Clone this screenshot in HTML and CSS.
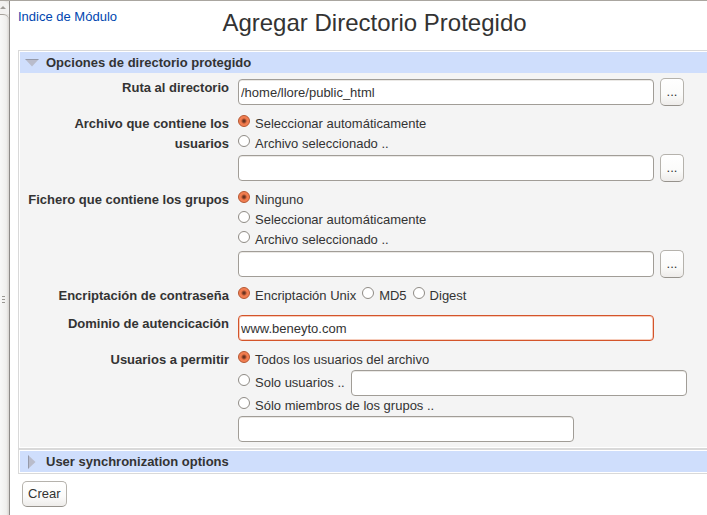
FILE: index.html
```
<!DOCTYPE html>
<html lang="es">
<head>
    <meta charset="UTF-8">
    <meta name="viewport" content="width=device-width, initial-scale=1.0">
    <title>Agregar Directorio Protegido</title>
    <link rel="stylesheet" href="styles.css">
</head>
<body>
    <div class="scrollbar">
        <div class="scroll-up">
            <svg width="6" height="3" viewBox="0 0 6 3"><path d="M0 3L3 0L6 3Z" fill="#a09d98"/></svg>
        </div>
        <div class="scroll-thumb">
            <svg width="3" height="8" viewBox="0 0 3 8"><path d="M0 .5H3M0 3.5H3M0 6.5H3" stroke="#9a9792"/></svg>
        </div>
    </div>
    <main class="page">
        <header class="header">
            <a href="#">Indice de Módulo</a>
            <h1>Agregar Directorio Protegido</h1>
        </header>
        <form>
            <section class="panel">
                <h2 class="panel-title">
                    <svg class="arrow" width="14" height="14" viewBox="0 0 14 14"><path d="M.5 3.5H13.5L7 10.5Z" fill="#b9bccb"/><path d="M.5 3.5H13.5" stroke="#9599a8"/></svg>
                    Opciones de directorio protegido
                </h2>
                <div class="options">
                    <label class="name" for="dir">Ruta al directorio</label>
                    <div class="line">
                        <input type="text" id="dir" class="text long" value="/home/llore/public_html">
                        <button type="button" class="browse">...</button>
                    </div>

                    <div class="name">Archivo que contiene los usuarios</div>
                    <div>
                        <label class="choice"><input type="radio" name="users" checked>Seleccionar automáticamente</label>
                        <label class="choice"><input type="radio" name="users">Archivo seleccionado ..</label>
                        <div class="line">
                            <input type="text" class="text long" aria-label="Archivo de usuarios">
                            <button type="button" class="browse">...</button>
                        </div>
                    </div>

                    <div class="name">Fichero que contiene los grupos</div>
                    <div>
                        <label class="choice"><input type="radio" name="groups" checked>Ninguno</label>
                        <label class="choice"><input type="radio" name="groups">Seleccionar automáticamente</label>
                        <label class="choice"><input type="radio" name="groups">Archivo seleccionado ..</label>
                        <div class="line">
                            <input type="text" class="text long" aria-label="Fichero de grupos">
                            <button type="button" class="browse">...</button>
                        </div>
                    </div>

                    <div class="name">Encriptación de contraseña</div>
                    <div class="choices">
                        <label class="choice"><input type="radio" name="crypt" checked>Encriptación Unix</label>
                        <label class="choice"><input type="radio" name="crypt">MD5</label>
                        <label class="choice"><input type="radio" name="crypt">Digest</label>
                    </div>

                    <label class="name" for="realm">Dominio de autencicación</label>
                    <div class="line">
                        <input type="text" id="realm" class="text long active" value="www.beneyto.com">
                    </div>

                    <div class="name">Usuarios a permitir</div>
                    <div>
                        <label class="choice"><input type="radio" name="allow" checked>Todos los usuarios del archivo</label>
                        <div class="choices with-text">
                            <label class="choice"><input type="radio" name="allow">Solo usuarios ..</label>
                            <input type="text" class="text short" aria-label="Solo usuarios">
                        </div>
                        <label class="choice"><input type="radio" name="allow">Sólo miembros de los grupos ..</label>
                        <input type="text" class="text short" aria-label="Sólo miembros de los grupos">
                    </div>
                </div>
            </section>
            <section class="panel">
                <h2 class="panel-title">
                    <svg class="arrow" width="14" height="14" viewBox="0 0 14 14"><path d="M3.5 .5V13.5L10.5 7Z" fill="#b9bccb"/><path d="M3.5 .5V13.5" stroke="#9599a8"/></svg>
                    User synchronization options
                </h2>
            </section>
            <button type="submit" class="create">Crear</button>
        </form>
    </main>
</body>
</html>
```
FILE: styles.css
```
body {
    margin: 0;
    min-height: 100vh;
    box-sizing: border-box;
    border-top: 1px solid #aaa6a0;
    display: flex;
    overflow: hidden;
    background-color: #fff;
    color: #333;
    font-family: "Liberation Sans", Arial, sans-serif;
    font-size: 13px;
    line-height: 20px;
}
.scrollbar {
    flex: none;
    width: 9px;
    border-right: 1px solid #8e8b88;
    background-color: #e6e4e1;
    display: flex;
    flex-direction: column;
}
.scroll-up {
    height: 13px;
    display: flex;
    align-items: center;
    background-color: #f2f1f0;
    border-top-right-radius: 6px;
}
.scroll-thumb {
    flex: 1;
    display: flex;
    align-items: center;
    padding: 70px 4px 0 2px;
    border-top: 1px solid #a5a19b;
    border-top-right-radius: 6px;
    background: linear-gradient(to right, #f8f8f7, #f0efed 70%, #d8d5d1);
}
.page {
    flex: 1;
    min-width: 0;
    padding-left: 8px;
}
.header {
    display: grid;
    grid-template-columns: 100px 1fr 76px;
    padding-top: 6px;
    height: 43px;
}
.header a {
    color: #0046b0;
    text-decoration: none;
    white-space: nowrap;
}
h1 {
    margin: 0;
    font-size: 24px;
    font-weight: normal;
    line-height: 32px;
    text-align: center;
    white-space: nowrap;
}
.panel {
    border: 1px solid #d9d9d9;
    border-right: none;
    padding: 1px 0 1px 1px;
}
.panel-title {
    margin: 0;
    padding-left: 5px;
    display: flex;
    align-items: center;
    gap: 7px;
    background-color: #cfdefc;
    font-size: 13px;
    line-height: 21px;
}
.arrow {
    flex: none;
}
.options {
    display: grid;
    grid-template-columns: 209px 1fr;
    gap: 8px 9px;
    padding: 5px 0;
    background-color: #f4f4f4;
}
.name {
    font-weight: bold;
    text-align: right;
}
.line {
    display: flex;
    align-items: center;
    gap: 6px;
    min-height: 28px;
}
.choice {
    display: flex;
    align-items: flex-start;
    height: 20px;
    white-space: nowrap;
}
.choices {
    display: flex;
    gap: 6px;
}
.with-text {
    align-items: center;
}
input[type="radio"] {
    appearance: none;
    box-sizing: border-box;
    flex: none;
    width: 12px;
    height: 12px;
    margin: 1px 5px 0 0;
    border: 1px solid #8f8b85;
    border-radius: 50%;
    background-color: #fff;
}
input[type="radio"]:checked {
    border-color: #b5532c;
    background: radial-gradient(circle, #6b3320 0, #6b3320 1px, #f0784a 3px, #f58a60 6px);
}
.text {
    box-sizing: border-box;
    display: block;
    height: 26px;
    padding: 0 2px;
    border: 1px solid #a19d97;
    border-radius: 4px;
    background-color: #fff;
    box-shadow: inset 0 1px #ebe9e6;
    color: #333;
    font: inherit;
}
.long {
    width: 416px;
}
.short {
    width: 336px;
}
.active {
    border-color: #d4542a;
    box-shadow: inset 0 0 0 1px #f6cdbc;
}
.browse, .create {
    box-sizing: border-box;
    border: 1px solid #b5b2ac;
    border-bottom-color: #96928c;
    border-radius: 5px;
    background: linear-gradient(#fff, #fbfbfa 60%, #eeecea);
    color: #333;
    font: inherit;
}
.browse {
    width: 24px;
    height: 28px;
    padding: 0;
}
.create {
    display: block;
    margin: 7px 0 0 4px;
    padding: 2px 5px;
}
```
